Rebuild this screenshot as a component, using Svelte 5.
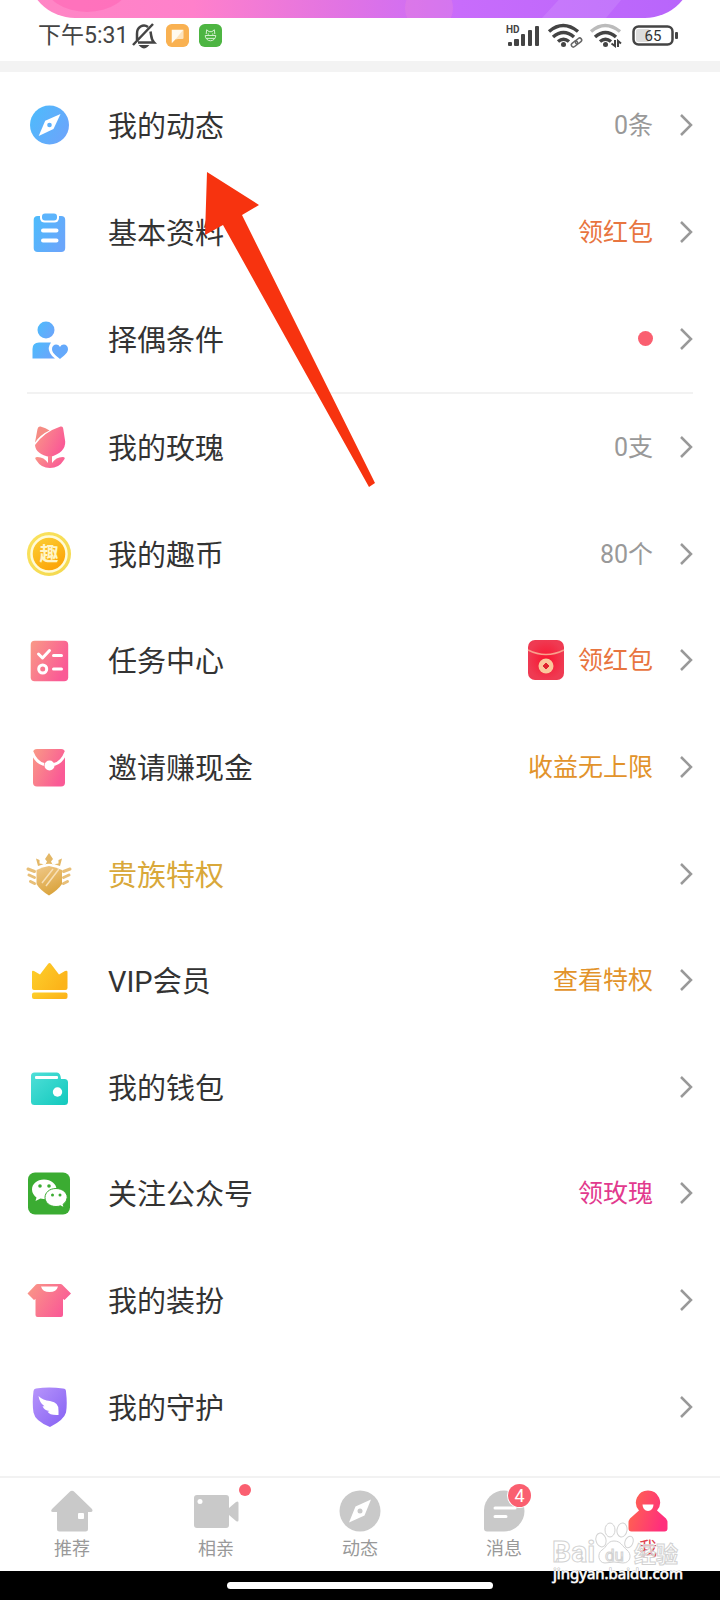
<script>
    let groups = [
        [
            { icon: 'compass', label: '我的动态', value: '0条' },
            { icon: 'clipboard', label: '基本资料', value: '领红包', tone: 'orange' },
            { icon: 'partner', label: '择偶条件', dot: true }
        ],
        [
            { icon: 'rose', label: '我的玫瑰', value: '0支' },
            { icon: 'coin', label: '我的趣币', value: '80个' },
            { icon: 'tasks', label: '任务中心', value: '领红包', tone: 'orange', packet: true },
            { icon: 'invite', label: '邀请赚现金', value: '收益无上限', tone: 'amber' },
            { icon: 'noble', label: '贵族特权', gold: true },
            { icon: 'vip', label: 'VIP会员', value: '查看特权', tone: 'amber' },
            { icon: 'wallet', label: '我的钱包' },
            { icon: 'wechat', label: '关注公众号', value: '领玫瑰', tone: 'pink' },
            { icon: 'shirt', label: '我的装扮' },
            { icon: 'guard', label: '我的守护' }
        ]
    ];

    let tabs = [
        { icon: 'home', label: '推荐' },
        { icon: 'video', label: '相亲', dot: true },
        { icon: 'explore', label: '动态' },
        { icon: 'chat', label: '消息', count: 4 },
        { icon: 'me', label: '我' }
    ];

    let activeTab = '我';
</script>

<!-- shared gradients -->
<svg class="defs" width="0" height="0" aria-hidden="true">
    <defs>
        <linearGradient id="blue" x1="0" y1="0" x2="1" y2="0.6">
            <stop offset="0" stop-color="#4cbcfc" />
            <stop offset="1" stop-color="#6aa6fb" />
        </linearGradient>
        <linearGradient id="rosy" x1="0" y1="0" x2="1" y2="0.5">
            <stop offset="0" stop-color="#f99a86" />
            <stop offset="1" stop-color="#fa5a96" />
        </linearGradient>
        <linearGradient id="coinFill" x1="0" y1="0" x2="0.6" y2="1">
            <stop offset="0" stop-color="#fbd238" />
            <stop offset="1" stop-color="#fca307" />
        </linearGradient>
        <linearGradient id="coinRim" x1="0" y1="0" x2="1" y2="1">
            <stop offset="0" stop-color="#fbe35e" />
            <stop offset="1" stop-color="#f3d84e" />
        </linearGradient>
        <linearGradient id="goldFill" x1="0" y1="0" x2="0.4" y2="1">
            <stop offset="0" stop-color="#f0c98a" />
            <stop offset="1" stop-color="#dba53f" />
        </linearGradient>
        <linearGradient id="crownFill" x1="0" y1="0" x2="1" y2="0.5">
            <stop offset="0" stop-color="#fdd02c" />
            <stop offset="1" stop-color="#fcb41a" />
        </linearGradient>
        <linearGradient id="teal" x1="0" y1="0" x2="1" y2="1">
            <stop offset="0" stop-color="#4fdfd8" />
            <stop offset="1" stop-color="#12c9bd" />
        </linearGradient>
        <linearGradient id="violet" x1="0" y1="0" x2="1" y2="1">
            <stop offset="0" stop-color="#b795fb" />
            <stop offset="1" stop-color="#8560f3" />
        </linearGradient>
        <linearGradient id="meFill" x1="0" y1="0" x2="1" y2="0.3">
            <stop offset="0" stop-color="#ff6a4a" />
            <stop offset="1" stop-color="#ff2f7c" />
        </linearGradient>
        <radialGradient id="packetFill">
            <stop offset="0" stop-color="#f9132f" />
            <stop offset="1" stop-color="#ef3a52" />
        </radialGradient>
    </defs>
</svg>

<div class="page">
    <header>
        <div class="banner">
            <div class="card">
                <svg class="shine" viewBox="0 0 666 100" preserveAspectRatio="none" aria-hidden="true">
                    <ellipse cx="60" cy="66" rx="42" ry="28" fill="#ff4fa8" opacity="0.35" />
                    <circle cx="402" cy="90" r="24" fill="#f08ad8" opacity="0.3" />
                    <path d="M515 100l46-50h60l-42 50z" fill="#fff" opacity="0.1" />
                </svg>
            </div>
        </div>
        <div class="status">
            <div class="status-group">
                <span class="time">下午5:31</span>
                <svg class="bell" viewBox="0 0 24 26" fill="none" stroke="#444" stroke-width="2.500">
                    <path d="M5 18V11a7 8 0 0 1 11-7M18.500 8.500c1 5 .5 8 3.500 11H6M1 22L21 1" />
                    <path d="M9 23q3 3 6 0z" fill="#444" stroke-width="2" />
                </svg>
                <svg class="app" viewBox="0 0 24 24">
                    <rect width="24" height="24" rx="6" fill="#f9b151" />
                    <path d="M6 6h12v9l-8 1-4 4z" fill="#fffaf0" />
                    <path d="M18 6v9l-8 1z" fill="#fde3bd" />
                </svg>
                <svg class="app" viewBox="0 0 24 24" fill="none" stroke="#d9f2d4">
                    <rect width="24" height="24" rx="6" fill="#4db542" stroke="none" />
                    <path d="M7.500 10.500L8 6l2.500 2h3L16 6l.5 4.500M6.500 12h11M6.500 12a5.500 5.500 0 0 0 11 0M7.500 15h9M9 10.500h1.500M13.500 10.500H15" />
                </svg>
            </div>
            <div class="status-group right">
                <svg class="signal" viewBox="0 0 34 24" fill="#444">
                    <text x="0" y="9" font-size="10" font-weight="700">HD</text>
                    <rect x="2" y="18" width="4" height="4" rx="1" />
                    <rect x="8" y="15" width="5" height="7" rx="1" />
                    <rect x="15" y="10" width="4" height="12" rx="1" />
                    <rect x="22" y="6" width="4" height="16" rx="1" />
                    <rect x="29" y="2" width="4" height="20" rx="1" />
                </svg>
                <svg class="wifi" viewBox="0 0 34 24" fill="none" stroke="#444" stroke-width="3.500">
                    <path d="M1 7.500q14-12 29 0M5 13q10.500-9 21 0M10 17.500q5.500-4.500 11 0" />
                    <circle cx="15.500" cy="20.500" r="2.500" fill="#444" stroke="none" />
                    <g stroke-width="1.500" stroke="#666">
                        <rect x="23" y="18" width="7" height="4" rx="2" transform="rotate(-40 26.500 20)" />
                        <rect x="27" y="15" width="7" height="4" rx="2" transform="rotate(-40 30.500 17)" />
                    </g>
                </svg>
                <svg class="wifi" viewBox="0 0 34 24" fill="none" stroke="#444" stroke-width="3.500">
                    <path d="M1 7.500q14-12 29 0" stroke="#bbb" />
                    <path d="M5 13q10.500-9 21 0M10 17.500q5.500-4.500 11 0" />
                    <circle cx="15.500" cy="20.500" r="2.500" fill="#444" stroke="none" />
                    <path d="M21.500 19.500L25 22v-6M28 23v-6l3 2.500" stroke-width="2" />
                </svg>
                <svg class="battery" viewBox="0 0 46 22">
                    <rect x="1.500" y="1.500" width="39" height="18" rx="5" fill="#fff" stroke="#444" stroke-width="2.500" />
                    <rect x="4" y="4" width="14" height="13" rx="2" fill="#ddd" />
                    <rect x="43" y="7" width="3" height="7" rx="1" fill="#444" />
                    <text x="21" y="16" font-size="15" text-anchor="middle" fill="#333">65</text>
                </svg>
            </div>
        </div>
    </header>

    <main>
        {#each groups as group}
        <ul style="flex-grow: {group.length};">
            {#each group as item}
            <li>
                <button class="row">
                    <svg class="icon" viewBox="0 0 44 44" aria-hidden="true">
                        {#if item.icon === 'compass'}
                            <circle cx="22.500" cy="22" r="19.500" fill="url(#blue)" />
                            <path d="M33.500 11L26.500 26 11.700 33 18.200 17.700z" fill="#fff" />
                            <circle cx="22.500" cy="22" r="2.300" fill="#5cb0fc" />
                        {:else if item.icon === 'clipboard'}
                            <rect x="6.700" y="6" width="31.500" height="36" rx="4" fill="url(#blue)" />
                            <rect x="13" y="1.500" width="19" height="11" rx="4.500" fill="#fff" />
                            <rect x="15" y="3.500" width="15" height="7" rx="3" fill="#5cb4fc" />
                            <path d="M16 20.500h13.500M16 30.500h13.500" stroke="#fff" stroke-width="4" stroke-linecap="round" />
                        {:else if item.icon === 'partner'}
                            <circle cx="19" cy="13" r="8.500" fill="url(#blue)" />
                            <path d="M5.500 41.500V32q0-6.500 6.500-6.500h12Q20 31 23 36q1.500 3 5 5.500z" fill="url(#blue)" />
                            <path d="M33 42c-5-4-8-6.500-8-10 0-5 6-6 8-2 2-4 8-3 8 2 0 3.500-3 6-8 10z" fill="#64a9fb" />
                        {:else if item.icon === 'rose'}
                            <path d="M8 17.500L10.500 4q.5-3 3-2.500Q19 3 22.500 5.500q-9 4-14.500 12z" fill="#f58c84" />
                            <path d="M8 20Q17 7 33.500 1.500q2.500-.5 2.700 2l2 13q.5 11-15 15.500Q8.500 29 8 20z" fill="url(#rosy)" />
                            <path d="M21 31h4v7q4-6 10.500-6 4 0 1 3.500Q32 43 23 43T9.500 35.500q-3-3.500 1-3.500 6.500 0 10.500 6z" fill="url(#rosy)" />
                        {:else if item.icon === 'coin'}
                            <circle cx="22" cy="22" r="22" fill="url(#coinRim)" />
                            <circle cx="22" cy="22" r="17.500" fill="url(#coinFill)" stroke="#fffbd8" stroke-width="2.500" />
                            <text x="22" y="29" font-size="19" font-weight="700" text-anchor="middle" fill="#fff5c8">趣</text>
                        {:else if item.icon === 'tasks'}
                            <rect x="3.700" y="2.700" width="37.500" height="40.500" rx="4" fill="url(#rosy)" />
                            <g fill="none" stroke="#fff" stroke-width="3" stroke-linecap="round" stroke-linejoin="round">
                                <path d="M11.500 16l4 4 7-7.500M26.500 17.500h8M26.500 31h8" />
                                <circle cx="15.700" cy="31" r="4" />
                            </g>
                        {:else if item.icon === 'invite'}
                            <path d="M10 4h24q4 0 4 4v29.500q0 4-4 4H10q-4 0-4-4V8q0-4 4-4z" fill="url(#rosy)" />
                            <path d="M5 7q4 10.500 12 12.500M39 7q-4 10.500-12 12.500" fill="none" stroke="#fff" stroke-width="3" />
                            <circle cx="22.500" cy="20.500" r="5" fill="#fff" />
                        {:else if item.icon === 'noble'}
                            <path d="M22 1l4 6-2 2.500 1.500 3 6-1V8L35 6.500 33 14Q22 9.500 11 14L9 6.500 12.500 8v3.500l6 1 1.500-3L18 7z" fill="#e3b766" />
                            <path d="M22 14q6 1 13 4v14q-4 6-13 11.500Q13 38 9.500 32V18q6-3 12.500-4z" fill="url(#goldFill)" />
                            <path d="M15 31l11-14M19 34l13-17" stroke="#f7dfb5" stroke-width="1.500" />
                            <path d="M1 17l6.500 2.500M2 23l5.500 2.500M3.500 29.500l4 2M43 17l-6.500 2.500M42 23l-5.500 2.500M40.500 29.500l-4 2" stroke="#e8bf78" stroke-width="3" stroke-linecap="round" />
                        {:else if item.icon === 'vip'}
                            <path d="M5 14q0-2 2-1l6 3.500L21 6q1.500-2 3 0l8 10.500 6-3.500q2.500-1 2.500 1v16q0 2-2 2H7q-2 0-2-2z" fill="url(#crownFill)" />
                            <rect x="5" y="34.500" width="35.500" height="6.500" rx="2" fill="url(#crownFill)" />
                        {:else if item.icon === 'wallet'}
                            <path d="M4 11q0-3.500 3.500-3.500H30q3.500 0 4 6.500h3.500q3.500 0 3.500 3.500v19q0 3.500-3.500 3.500h-30Q4 40 4 36.500z" fill="url(#teal)" />
                            <rect x="8" y="11" width="23" height="3" rx="1" fill="#fff" />
                            <circle cx="30.500" cy="27" r="4.700" fill="#fff" />
                        {:else if item.icon === 'wechat'}
                            <rect x="1" y="1.500" width="42" height="42" rx="7" fill="#3bac32" />
                            <path d="M17 8.500c-7 0-12 4.500-12 10 0 3.500 2 6 4.500 8L8.500 30l5-2.500q8 2 12-1.500 4-3 4-7.500c0-5.500-5.500-10-12.500-10z" fill="#fff" />
                            <path d="M29 17.500c-6.500 0-11 4-11 9s4.500 9 11 9q2.500 0 4.500-.7l3.500 2-.8-3.500q4-3 4-7c0-4.800-5-8.800-11.200-8.800z" fill="#fff" stroke="#3bac32" />
                            <g fill="#3bac32">
                                <circle cx="13" cy="15" r="1.800" />
                                <circle cx="22" cy="15" r="1.800" />
                                <circle cx="25.500" cy="24" r="1.500" />
                                <circle cx="33" cy="24" r="1.500" />
                            </g>
                        {:else if item.icon === 'shirt'}
                            <path d="M10.500 6h23q1 0 1.500.5l9 9-6.500 6.500-1.500-1v16q0 2-2 2H10.500q-2 0-2-2V21L7 22 .5 15.500l8.500-9q.5-.5 1.500-.5z" fill="url(#rosy)" />
                            <path d="M14 8.500h17Q29.500 14 22.500 14T14 8.500z" fill="#fff" />
                        {:else}
                            <path d="M9 3.500q13-2 27 0 3 0 3 3 1.500 13 0 21Q37 35 23 42 8 36 6.500 27.500 5 18 6.500 6q.3-2.300 2.500-2.500z" fill="url(#violet)" />
                            <path d="M11.500 11q4.500 4.500 11.500 5 9.500 1.500 8.500 10V30q-9 .5-11-3.500 1 0 2-.5-5.500-.5-7-5 1 .5 2 .3Q12.500 18 11.500 11z" fill="#fff" />
                        {/if}
                    </svg>
                    <span class="label" class:gold={item.gold}>{item.label}</span>
                    {#if item.packet}
                    <svg class="packet" viewBox="0 0 36 40" aria-hidden="true">
                        <rect width="36" height="40" rx="7" fill="url(#packetFill)" />
                        <path d="M0 10q18 9 36 0" fill="none" stroke="#f9a08c" stroke-width="1.500" />
                        <circle cx="18" cy="26" r="7.500" fill="#fbc89c" />
                        <path d="M18 23l3 3-3 3-3-3z" fill="#e0242f" stroke="#e0242f" />
                    </svg>
                    {/if}
                    {#if item.value}
                    <span class="value {item.tone}">{item.value}</span>
                    {/if}
                    {#if item.dot}
                    <span class="dot"></span>
                    {/if}
                    <svg class="chevron" viewBox="0 0 13 24" aria-hidden="true">
                        <path d="M1 2l10 10L1 22" fill="none" stroke="#999" stroke-width="2.500" />
                    </svg>
                </button>
            </li>
            {/each}
        </ul>
        {/each}
    </main>

    <nav>
        {#each tabs as tab}
        <button class="tab" class:active={tab.label === activeTab} on:click={() => activeTab = tab.label}>
            <span class="tab-icon">
                <svg viewBox="0 0 44 44" fill="#c9c9c9" aria-hidden="true">
                    {#if tab.icon === 'home'}
                        <path d="M19.500 3q2.500-2.500 5 0L42 20q1.500 3-1.500 3H38v17q0 2.500-2.500 2.500h-26Q7 42.500 7 40V23H3Q0 23 2 20z" />
                        <rect x="28" y="24" width="6" height="6" rx="1" fill="#fff" />
                    {:else if tab.icon === 'video'}
                        <rect x="0" y="6" width="35" height="33" rx="3" />
                        <path d="M35 19l7-6q2.500-1.500 2.500 1v17q0 2.500-2.500 1l-7-6z" />
                        <circle cx="6" cy="12.500" r="2.500" fill="#fff" />
                    {:else if tab.icon === 'explore'}
                        <circle cx="22" cy="22" r="20.500" />
                        <path d="M33 10.500L26.500 26.500 11 33.500l6.500-16z" fill="#fff" />
                        <circle cx="22" cy="22" r="2.500" />
                    {:else if tab.icon === 'chat'}
                        <path d="M22 1.500a20 20 0 0 1 0 41H5q-3 0-3-3V21A20 20 0 0 1 22 1.500z" />
                        <path d="M13 19h20M13 27.500h11" stroke="#fff" stroke-width="3" stroke-linecap="round" />
                    {:else}
                        <path d="M22 1.500a12 12 0 0 1 9 20L40 29.500q1.500 2 1.500 4v6q0 3-3 3h-33q-3 0-3-3v-6q0-2 1.500-4l9-8a12 12 0 0 1 9-20z" fill="url(#meFill)" />
                        <path d="M16.500 15.500h11Q27 22 22 22t-5.500-6.500z" fill="#fff" />
                    {/if}
                </svg>
                {#if tab.dot}
                <span class="badge-dot"></span>
                {/if}
                {#if tab.count}
                <span class="badge">{tab.count}</span>
                {/if}
            </span>
            <span class="tab-label">{tab.label}</span>
        </button>
        {/each}
    </nav>

    <div class="gesture">
        <span class="pill"></span>
    </div>

    <svg class="arrow" viewBox="0 0 172 318" aria-hidden="true">
        <path d="M3 1L55 34 38 44 171 312 165 316 19 54 1 64z" fill="#f7330f" />
    </svg>

    <svg class="watermark" viewBox="0 0 130 66" aria-hidden="true">
        <g fill="#fff" fill-opacity="0.6" stroke="#d2d2d2" stroke-width="1">
            <text x="0" y="41" font-size="30" font-weight="700">Bai</text>
            <ellipse cx="49" cy="19" rx="5" ry="7" transform="rotate(-15 49 19)" />
            <ellipse cx="58" cy="9" rx="5" ry="7" />
            <ellipse cx="70" cy="9" rx="5" ry="7" transform="rotate(10 70 9)" />
            <ellipse cx="77" cy="21" rx="4" ry="6" transform="rotate(20 77 21)" />
            <path d="M62 20c-7 0-7 6-12 9s-4 13 3 13q9-2 18 0c8 0 9-9 4-13s-6-9-13-9z" />
            <text x="53" y="40" font-size="17">du</text>
            <text x="82" y="41" font-size="22" font-weight="700">经验</text>
        </g>
        <text class="url" x="1" y="58" font-size="15" fill="#fff">jingyan.baidu.com</text>
    </svg>
</div>

<style>
    :global(body) {
        margin: 0;
        background: #fff;
    }

    .defs {
        position: absolute;
    }

    .page {
        position: relative;
        display: flex;
        flex-direction: column;
        min-height: 100vh;
        overflow: hidden;
        background: #fff;
        color: #333;
        font-family: Roboto, "Noto Sans CJK SC", sans-serif;
    }

    svg {
        display: block;
        flex-shrink: 0;
        overflow: visible;
    }

    button {
        margin: 0;
        border: none;
        background: none;
        color: inherit;
        font-family: inherit;
        cursor: pointer;
    }

    header {
        border-bottom: 11px solid #f3f3f3;
    }

    .banner {
        display: flex;
        align-items: flex-end;
        height: 18px;
        padding: 0 27px;
        overflow: hidden;
    }

    .card {
        flex: 1;
        height: 100px;
        border-radius: 48px;
        overflow: hidden;
        background: linear-gradient(90deg, #ff86c4 0%, #ff80cb 25%, #e073e4 48%, #c86cfb 65%, #b765fb 100%);
    }

    .shine {
        width: 100%;
        height: 100%;
    }

    .status {
        display: flex;
        align-items: center;
        justify-content: space-between;
        height: 35px;
        padding: 0 42px 8px 38px;
    }

    .status-group {
        display: flex;
        align-items: center;
        gap: 10px;
    }

    .right {
        gap: 8px;
    }

    .time {
        font-size: 23px;
        line-height: 32px;
        color: #444;
    }

    .bell {
        width: 24px;
        height: 26px;
        margin-left: -6px;
    }

    .app {
        width: 23px;
        height: 23px;
    }

    .signal,
    .wifi {
        width: 34px;
        height: 24px;
    }

    .battery {
        width: 46px;
        height: 22px;
    }

    main {
        flex: 1;
        display: flex;
        flex-direction: column;
        padding: 0 27px 16px;
    }

    ul {
        flex: 1 0 0;
        display: flex;
        flex-direction: column;
        margin: 0;
        padding: 0;
        list-style: none;
    }

    ul + ul {
        border-top: 2px solid #f2f2f2;
    }

    li {
        flex: 1;
        display: flex;
        min-height: 64px;
    }

    .row {
        flex: 1;
        display: flex;
        align-items: center;
        padding: 0;
        text-align: left;
    }

    .icon {
        width: 44px;
        height: 44px;
    }

    .label {
        flex: 1;
        margin-left: 37px;
        padding-top: 4px;
        font-size: 29px;
        line-height: 44px;
    }

    .gold {
        color: #d9a83a;
    }

    .value {
        padding-top: 2px;
        font-size: 25px;
        line-height: 36px;
        color: #999;
    }

    .orange {
        color: #e8753f;
    }

    .amber {
        color: #e2932b;
    }

    .pink {
        color: #e23a8e;
    }

    .packet {
        width: 36px;
        height: 40px;
        margin-right: 14px;
    }

    .dot {
        width: 15px;
        height: 15px;
        border-radius: 50%;
        background: #fa5f70;
    }

    .chevron {
        width: 13px;
        height: 24px;
        margin-left: 27px;
    }

    nav {
        display: flex;
        border-top: 2px solid #f2f2f2;
    }

    .tab {
        flex: 1;
        display: flex;
        flex-direction: column;
        align-items: center;
        gap: 4px;
        padding: 11px 0 10px;
        color: #999;
    }

    .tab-icon {
        position: relative;
    }

    .tab-icon svg {
        width: 44px;
        height: 44px;
    }

    .tab-label {
        font-size: 18px;
        line-height: 24px;
    }

    .active {
        color: #e0434f;
    }

    .badge-dot {
        position: absolute;
        top: -5px;
        right: -13px;
        width: 12px;
        height: 12px;
        border-radius: 50%;
        background: #fa5f70;
    }

    .badge {
        position: absolute;
        top: -5px;
        right: -5px;
        width: 23px;
        height: 23px;
        border-radius: 50%;
        background: #fa5f70;
        box-shadow: 0 0 0 1px #fff;
        color: #fff;
        font-size: 18px;
        line-height: 24px;
        text-align: center;
    }

    .gesture {
        display: flex;
        justify-content: center;
        padding: 11px 0;
        background: #000;
    }

    .pill {
        width: 37%;
        height: 7px;
        border-radius: 4px;
        background: #fff;
    }

    .arrow {
        position: absolute;
        top: 171px;
        left: 204px;
        width: 172px;
        height: 318px;
        pointer-events: none;
    }

    .watermark {
        position: absolute;
        right: 38px;
        bottom: 13px;
        width: 130px;
        height: 66px;
        pointer-events: none;
    }

    .url {
        font-family: "Noto Sans", sans-serif;
        paint-order: stroke;
        stroke: #bbb;
        stroke-width: 1px;
    }
</style>
